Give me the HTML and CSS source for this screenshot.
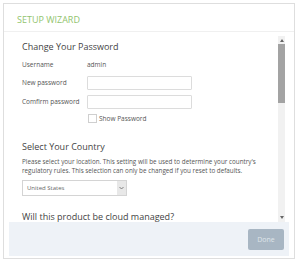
FILE: index.html
```html
<!DOCTYPE html>
<html lang="en">
<head>
    <meta charset="UTF-8">
    <title>Setup Wizard</title>
    <link rel="stylesheet" href="styles.css">
</head>
<body>
    <div class="wizard">
        <div class="wizard-header">SETUP WIZARD</div>
        <div class="wizard-main">
            <div class="scroll-area">
                <div class="content">
                    <h2>Change Your Password</h2>
                    <div class="form-row user-row">
                        <span class="label">Username</span>
                        <span class="value">admin</span>
                    </div>
                    <div class="form-row">
                        <span class="label">New password</span>
                        <input type="password" class="text-input">
                    </div>
                    <div class="form-row">
                        <span class="label">Comfirm password</span>
                        <input type="password" class="text-input">
                    </div>
                    <div class="form-row check-row">
                        <span class="label"></span>
                        <label class="check"><span class="box"></span>Show Password</label>
                    </div>

                    <h2 class="country-title">Select Your Country</h2>
                    <p class="note">Please select your location. This setting will be used to determine your country's regulatory rules. This selection can only be changed if you reset to defaults.</p>
                    <div class="select">
                        <span class="select-text">United States</span>
                        <span class="select-arrow">
                            <svg width="5" height="4" viewBox="0 0 5 4"><path d="M0.5 1 L2.5 3 L4.5 1" fill="none" stroke="#666" stroke-width="0.8"/></svg>
                        </span>
                    </div>

                    <h2 class="cloud-title">Will this product be cloud managed?</h2>
                </div>
                <div class="scrollbar">
                    <span class="arrow-up"></span>
                    <div class="track">
                        <div class="thumb"></div>
                    </div>
                    <span class="arrow-down"></span>
                </div>
            </div>
            <div class="wizard-footer">
                <button type="button" class="done-button">Done</button>
            </div>
        </div>
    </div>
</body>
</html>
```

FILE: styles.css
```css
body {
    margin: 0;
    padding: 0;
    background-color: #ffffff;
    font-family: "Open Sans", sans-serif;
    color: #555555;
}
.wizard {
    margin: 3px;
    width: 290px;
    height: 254px;
    border: 1px solid #dedede;
    display: flex;
    flex-direction: column;
}
.wizard-header {
    height: 23px;
    padding: 4px 13px 0 13px;
    display: flex;
    align-items: center;
    border-bottom: 1px solid #f0f0f0;
    color: #92c46e;
    font-size: 9px;
}
.wizard-main {
    flex: 1;
    padding: 0 5px 2px 5px;
    display: flex;
    flex-direction: column;
}
.scroll-area {
    height: 190px;
    display: flex;
    overflow: hidden;
}
.content {
    flex: 1;
    padding: 0 0 0 13px;
    overflow: hidden;
}
h2 {
    margin: 9px 0 0 0;
    font-size: 9px;
    font-weight: 400;
    line-height: 12px;
    color: #444444;
}
.form-row {
    display: flex;
    align-items: center;
    height: 19px;
    font-size: 6.5px;
}
.user-row {
    margin-top: 2px;
    height: 18px;
}
.label {
    width: 65px;
}
.text-input {
    width: 105px;
    height: 14px;
    box-sizing: border-box;
    border: 1px solid #dcdcdc;
    border-radius: 1px;
    padding: 0;
    margin: 0;
}
.check-row {
    height: 14px;
}
.check {
    display: flex;
    align-items: center;
    gap: 2px;
}
.box {
    width: 7px;
    height: 7px;
    border: 1px solid #cfcfcf;
    margin-left: 1px;
}
.country-title {
    margin-top: 16px;
}
.note {
    margin: 4px 0 0 0;
    font-size: 6.3px;
    line-height: 9px;
    color: #555555;
}
.select {
    margin-top: 5px;
    width: 105px;
    height: 16px;
    box-sizing: border-box;
    border: 1px solid #d4d4d4;
    display: flex;
    align-items: center;
    font-size: 6px;
    color: #666666;
}
.select-text {
    flex: 1;
    padding-left: 4px;
}
.select-arrow {
    width: 9px;
    height: 14px;
    background-color: #e8e8e8;
    display: flex;
    align-items: center;
    justify-content: center;
}
.cloud-title {
    margin-top: 15px;
}
.scrollbar {
    width: 7px;
    margin: 4px 4px 0 0;
    display: flex;
    flex-direction: column;
    align-items: center;
    background-color: #f1f1f1;
}
.arrow-up {
    width: 0;
    height: 0;
    margin: 3px 0 2px 0;
    border-left: 2px solid transparent;
    border-right: 2px solid transparent;
    border-bottom: 3px solid #666666;
}
.track {
    flex: 1;
    width: 7px;
}
.thumb {
    height: 59px;
    background-color: #a3a3a3;
}
.arrow-down {
    width: 0;
    height: 0;
    margin: 2px 0 3px 0;
    border-left: 2px solid transparent;
    border-right: 2px solid transparent;
    border-top: 3px solid #666666;
}
.wizard-footer {
    flex: 1;
    background-color: #eef2f7;
    display: flex;
    justify-content: flex-end;
    align-items: flex-start;
    padding: 7px 5px 0 0;
}
.done-button {
    width: 36px;
    height: 21px;
    border: none;
    border-radius: 2px;
    background-color: #a8b6c3;
    color: #dfe5ea;
    font-family: "Open Sans", sans-serif;
    font-size: 7px;
    padding: 0;
}
```
